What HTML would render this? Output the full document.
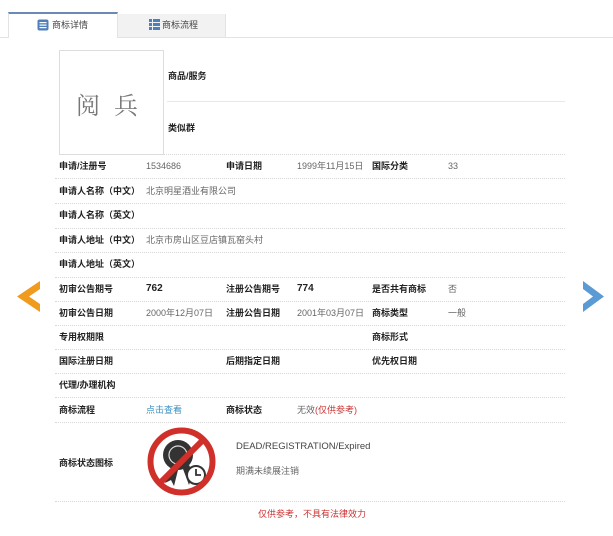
<!DOCTYPE html>
<html><head><meta charset="utf-8">
<style>
*{margin:0;padding:0;box-sizing:border-box}
body{width:613px;height:536px;background:#fff;position:relative;overflow:hidden;font-family:"Liberation Sans","Noto Sans CJK SC",sans-serif;font-size:9px;color:#333}
.a{position:absolute;white-space:nowrap;line-height:12px}
.l{position:absolute;left:55px;width:510px;border-top:1px dotted #d8d8d8;height:0}
.b{font-weight:bold;font-size:10px;color:#222}
.g{color:#666}
</style></head><body>
<div class="a" style="left:0;top:37px;width:613px;border-top:1px solid #e3e3e3"></div>
<div style="position:absolute;left:8px;top:12px;width:110px;height:26px;background:#fff;border-top:2px solid #6a8ab5;border-left:1px solid #e3e3e3;border-right:1px solid #e3e3e3"></div>
<div style="position:absolute;left:118px;top:14px;width:108px;height:23px;background:#f2f2f2;border-right:1px solid #e3e3e3"></div>
<svg style="position:absolute;left:37px;top:19px" width="12" height="12"><rect x="0.5" y="0.5" width="11" height="11" rx="2" fill="#4f7fb8"/><rect x="2.5" y="3" width="7" height="1.2" fill="#fff"/><rect x="2.5" y="5.5" width="7" height="1.2" fill="#fff"/><rect x="2.5" y="8" width="7" height="1.2" fill="#fff"/></svg>
<div class="a" style="left:52px;top:19px;color:#444">商标详情</div>
<svg style="position:absolute;left:149px;top:19px" width="11" height="11"><g fill="#4f7fb8"><rect x="0" y="0" width="3" height="3"/><rect x="4" y="0" width="7" height="3"/><rect x="0" y="4" width="3" height="3"/><rect x="4" y="4" width="7" height="3"/><rect x="0" y="8" width="3" height="3"/><rect x="4" y="8" width="7" height="3"/></g></svg>
<div class="a" style="left:162px;top:19px;color:#444">商标流程</div>

<div style="position:absolute;left:59px;top:50px;width:105px;height:105px;border:1px solid #ddd"></div>
<div class="a" style="left:76px;top:90px;font-family:'Noto Serif CJK SC',serif;font-size:24px;line-height:28px;color:#777;letter-spacing:14px">阅兵</div>
<div class="a b" style="left:168px;top:70px;font-size:9px">商品/服务</div>
<div class="a" style="left:167px;top:101px;width:398px;border-top:1px solid #e8e8e8"></div>
<div class="a b" style="left:168px;top:122px;font-size:9px">类似群</div>
<div class="l" style="top:154px;left:164px;width:401px"></div>

<!-- rows -->
<div class="a b" style="left:59px;top:160px;font-size:9px">申请/注册号</div><div class="a g" style="left:146px;top:160px">1534686</div>
<div class="a b" style="left:226px;top:160px;font-size:9px">申请日期</div><div class="a g" style="left:297px;top:160px">1999年11月15日</div>
<div class="a b" style="left:372px;top:160px;font-size:9px">国际分类</div><div class="a g" style="left:448px;top:160px">33</div>
<div class="l" style="top:178px"></div>
<div class="a b" style="left:59px;top:185px;font-size:9px">申请人名称（中文）</div><div class="a g" style="left:146px;top:185px">北京明星酒业有限公司</div>
<div class="l" style="top:203px"></div>
<div class="a b" style="left:59px;top:209px;font-size:9px">申请人名称（英文）</div>
<div class="l" style="top:228px"></div>
<div class="a b" style="left:59px;top:234px;font-size:9px">申请人地址（中文）</div><div class="a g" style="left:146px;top:234px">北京市房山区豆店镇瓦窑头村</div>
<div class="l" style="top:252px"></div>
<div class="a b" style="left:59px;top:258px;font-size:9px">申请人地址（英文）</div>
<div class="l" style="top:277px"></div>
<div class="a b" style="left:59px;top:283px;font-size:9px">初审公告期号</div><div class="a b" style="left:146px;top:283px">762</div>
<div class="a b" style="left:226px;top:283px;font-size:9px">注册公告期号</div><div class="a b" style="left:297px;top:283px">774</div>
<div class="a b" style="left:372px;top:283px;font-size:9px">是否共有商标</div><div class="a g" style="left:448px;top:283px">否</div>
<div class="l" style="top:301px"></div>
<div class="a b" style="left:59px;top:307px;font-size:9px">初审公告日期</div><div class="a g" style="left:146px;top:307px">2000年12月07日</div>
<div class="a b" style="left:226px;top:307px;font-size:9px">注册公告日期</div><div class="a g" style="left:297px;top:307px">2001年03月07日</div>
<div class="a b" style="left:372px;top:307px;font-size:9px">商标类型</div><div class="a g" style="left:448px;top:307px">一般</div>
<div class="l" style="top:325px"></div>
<div class="a b" style="left:59px;top:331px;font-size:9px">专用权期限</div>
<div class="a b" style="left:372px;top:331px;font-size:9px">商标形式</div>
<div class="l" style="top:349px"></div>
<div class="a b" style="left:59px;top:355px;font-size:9px">国际注册日期</div>
<div class="a b" style="left:226px;top:355px;font-size:9px">后期指定日期</div>
<div class="a b" style="left:372px;top:355px;font-size:9px">优先权日期</div>
<div class="l" style="top:373px"></div>
<div class="a b" style="left:59px;top:379px;font-size:9px">代理/办理机构</div>
<div class="l" style="top:397px"></div>
<div class="a b" style="left:59px;top:404px;font-size:9px">商标流程</div><div class="a" style="left:146px;top:404px;color:#3a8fc0">点击查看</div>
<div class="a b" style="left:226px;top:404px;font-size:9px">商标状态</div><div class="a g" style="left:297px;top:404px">无效<span style="color:#c33">(仅供参考)</span></div>
<div class="l" style="top:422px"></div>
<div class="a b" style="left:59px;top:457px;font-size:9px">商标状态图标</div>
<svg style="position:absolute;left:145px;top:425px" width="73" height="73" viewBox="0 0 73 73">
<g fill="#333"><circle cx="33" cy="30" r="15"/><polygon points="26,42 20,58 26,55 29,61 33,45"/><polygon points="38,44 44,60 46,54 52,56 44,40"/></g>
<circle cx="33" cy="30" r="9" fill="none" stroke="#ddd" stroke-width="1.2"/>
<circle cx="51" cy="50" r="9" fill="#fff" stroke="#333" stroke-width="2"/>
<path d="M51 44v6h5" stroke="#333" stroke-width="1.8" fill="none"/>
<circle cx="36.5" cy="36.5" r="31" fill="none" stroke="#d0302a" stroke-width="6"/>
<line x1="58" y1="15" x2="15" y2="58" stroke="#d0302a" stroke-width="6"/>
</svg>
<div class="a" style="left:236px;top:441px;font-size:9.5px;color:#444">DEAD/REGISTRATION/Expired</div>
<div class="a g" style="left:236px;top:465px">期满未续展注销</div>
<div class="l" style="top:501px"></div>
<div class="a" style="left:258px;top:508px;color:#c33">仅供参考，不具有法律效力</div>

<svg style="position:absolute;left:17px;top:281px" width="24" height="31"><polygon points="23,0 0,15.5 23,31 23,23 12,15.5 23,8" fill="#f09a1e"/></svg>
<svg style="position:absolute;left:583px;top:281px" width="21" height="31"><polygon points="0,0 21,15.5 0,31 0,23 10,15.5 0,8" fill="#5b9bd5"/></svg>
</body></html>
